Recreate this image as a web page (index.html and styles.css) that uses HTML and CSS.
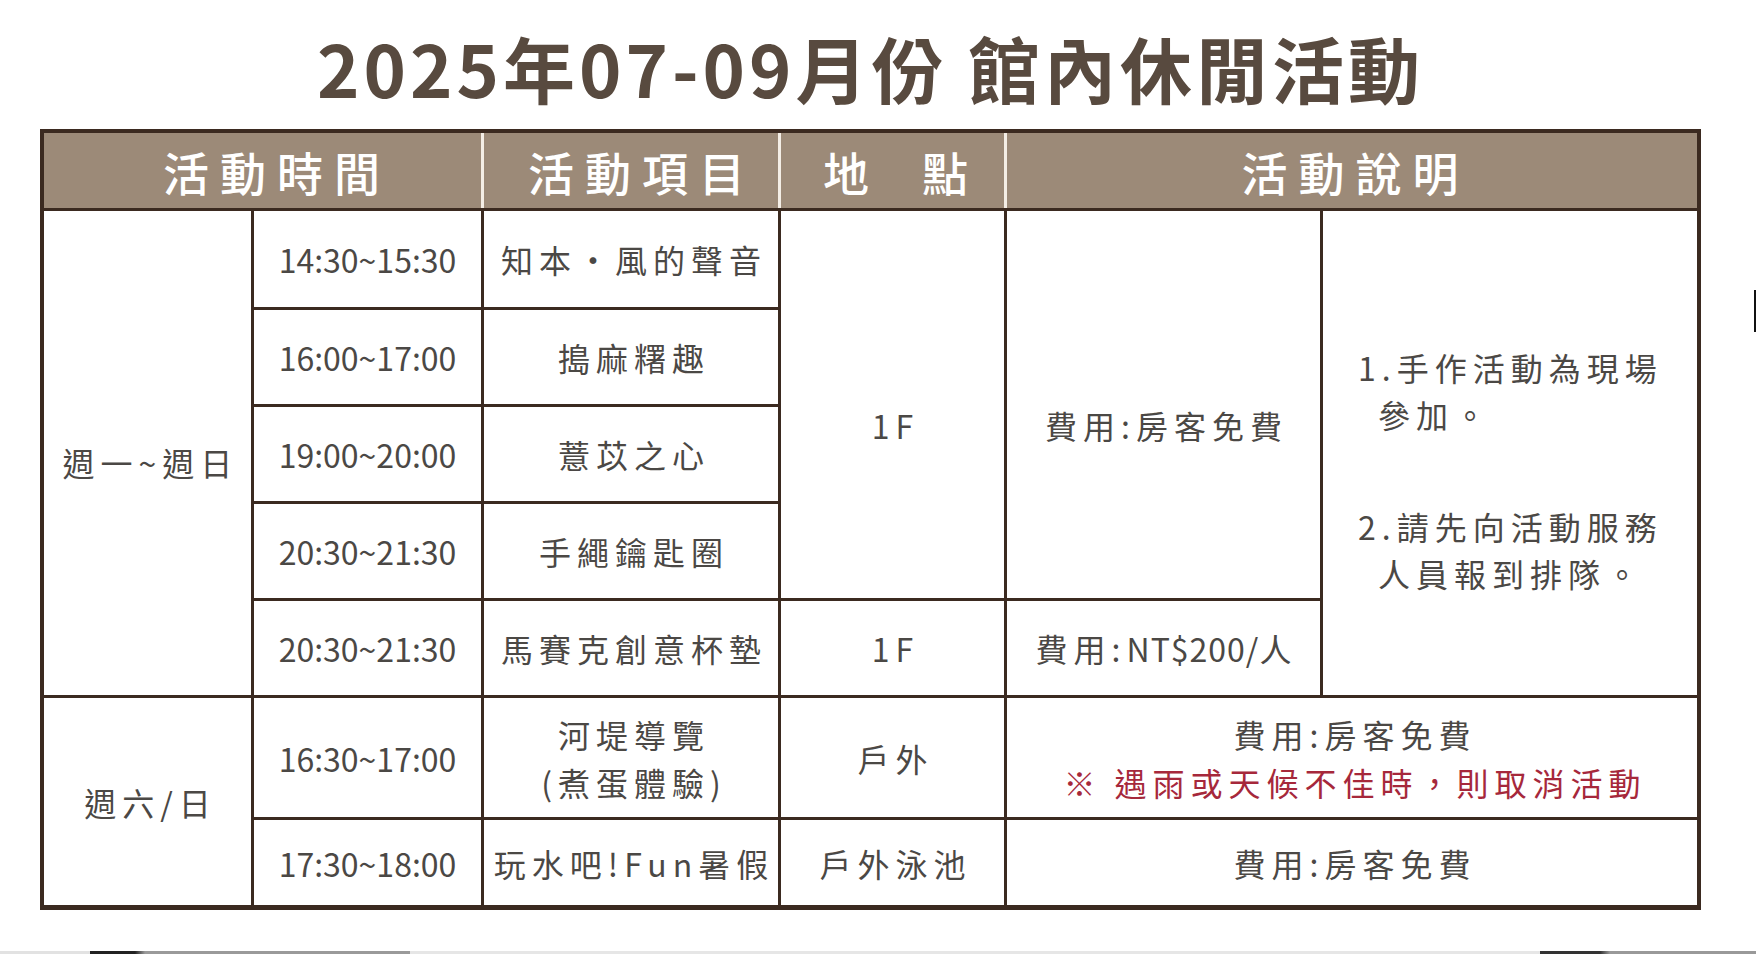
FILE: index.html
```html
<!DOCTYPE html>
<html lang="zh-Hant">
<head>
<meta charset="utf-8">
<title>2025年07-09月份 館內休閒活動</title>
<link rel="stylesheet" href="styles.css">
</head>
<body>
<main class="page">
  <div class="wrap">
    <h1 class="title">2025年07-09月份 館內休閒活動</h1>
    <section class="sheet">
      <div class="head">
        <div class="hc hc-time">活動時間</div>
        <div class="hc hc-item">活動項目</div>
        <div class="hc hc-place">地<span class="gap"></span>點</div>
        <div class="hc hc-desc">活動說明</div>
      </div>
      <div class="grid">
        <div class="cell day-week">週一~週日</div>
        <div class="cell time r1">14:30~15:30</div>
        <div class="cell item r1">知本・風的聲音</div>
        <div class="cell time r2">16:00~17:00</div>
        <div class="cell item r2">搗麻糬趣</div>
        <div class="cell time r3">19:00~20:00</div>
        <div class="cell item r3">薏苡之心</div>
        <div class="cell time r4">20:30~21:30</div>
        <div class="cell item r4">手繩鑰匙圈</div>
        <div class="cell time r5">20:30~21:30</div>
        <div class="cell item r5">馬賽克創意杯墊</div>
        <div class="cell place-big">1F</div>
        <div class="cell fee-big">費用:房客免費</div>
        <div class="cell notes">
          <p class="note">1.手作活動為現場<br>參加。</p>
          <p class="note">2.請先向活動服務<br>人員報到排隊。</p>
        </div>
        <div class="cell place r5">1F</div>
        <div class="cell fee r5"><span>費用:<span class="latin">NT$200/</span>人</span></div>

        <div class="cell day-weekend">週六/日</div>
        <div class="cell time r6">16:30~17:00</div>
        <div class="cell item r6"><span class="stack">河堤導覽<br>(煮蛋體驗)</span></div>
        <div class="cell place r6">戶外</div>
        <div class="cell wide r6"><span class="stack">費用:房客免費<br><span class="warn">※ 遇雨或天候不佳時，則取消活動</span></span></div>
        <div class="cell time r7">17:30~18:00</div>
        <div class="cell item r7">玩水吧!Fun暑假</div>
        <div class="cell place r7">戶外泳池</div>
        <div class="cell wide r7">費用:房客免費</div>
      </div>
    </section>
  </div>
  <div class="edge-mark"></div>
  <div class="bottom-strip"></div>
</main>
</body>
</html>
```

FILE: styles.css
```css
* { box-sizing: border-box; }

html, body {
  margin: 0;
  padding: 0;
  background: #ffffff;
}

body {
  font-family: "Noto Sans CJK TC", "Noto Sans", sans-serif;
  color: #4b4845;
}

.page {
  position: relative;
  width: 1756px;
  height: 954px;
  overflow: hidden;
  display: flex;
  flex-direction: column;
}

.wrap {
  margin-left: 40px;
  width: 1661px;
  padding-top: 31px;
  flex: 1;
}

.title {
  margin: 0 0 26px 0;
  font-size: 72px;
  line-height: 72px;
  font-weight: 700;
  letter-spacing: 4px;
  color: #584a3f;
  text-align: center;
  white-space: nowrap;
}

.sheet {
  width: 1661px;
  border: 4px solid #3b2a20;
  border-bottom-width: 5px;
  background: #3b2a20;
  display: flex;
  flex-direction: column;
  gap: 3px;
}

.head {
  display: grid;
  grid-template-columns: 437px 294px 223px 690px;
  column-gap: 3px;
  height: 75px;
  background: #f4eee6;
}

.hc {
  background: #9c8a78;
  color: #ffffff;
  font-size: 46px;
  font-weight: 500;
  letter-spacing: 11px;
  display: flex;
  align-items: center;
  justify-content: center;
  padding-left: 11px;
}

.hc-time { padding-left: 29px; }
.hc-item { padding-left: 22px; }
.hc-place { padding-left: 17px; }
.hc-desc { padding-left: 7px; }

.hc .gap {
  display: inline-block;
  width: 42px;
}

.grid {
  display: grid;
  grid-template-columns: 207px 227px 294px 223px 313px 374px;
  grid-template-rows: 96px 94px 94px 94px 94px 119px 85px;
  gap: 3px;
}

.cell {
  background: #ffffff;
  display: flex;
  align-items: center;
  justify-content: center;
  text-align: center;
  font-size: 32px;
  line-height: 48px;
  letter-spacing: 6px;
  padding-left: 6px;
  white-space: nowrap;
}

.stack { display: block; }

.r1 { grid-row: 1; }
.r2 { grid-row: 2; }
.r3 { grid-row: 3; }
.r4 { grid-row: 4; }
.r5 { grid-row: 5; }
.r6 { grid-row: 6; }
.r7 { grid-row: 7; }

.time {
  grid-column: 2;
  font-size: 32px;
  letter-spacing: 0;
  padding-left: 0;
}

.item { grid-column: 3; }
.place { grid-column: 4; }
.fee { grid-column: 5; }
.wide { grid-column: 5 / span 2; }

.day-week {
  grid-column: 1;
  grid-row: 1 / span 5;
  padding-top: 18px;
}

.day-weekend {
  grid-column: 1;
  grid-row: 6 / span 2;
}

.place-big {
  grid-column: 4;
  grid-row: 1 / span 4;
  padding-top: 41px;
}

.fee-big {
  grid-column: 5;
  grid-row: 1 / span 4;
  padding-top: 41px;
}

.notes {
  grid-column: 6;
  grid-row: 1 / span 5;
  flex-direction: column;
  align-items: flex-start;
  justify-content: center;
  text-align: left;
  padding: 34px 0 0 35px;
}

.note {
  margin: 0;
  line-height: 47px;
  padding-left: 20px;
  text-indent: -20px;
}

.note + .note { margin-top: 65px; }

.latin { letter-spacing: 1px; }

.warn {
  color: #a6283b;
}

.edge-mark {
  position: absolute;
  right: 0;
  top: 290px;
  width: 2px;
  height: 42px;
  background: #111111;
}

.bottom-strip {
  height: 3px;
  background: linear-gradient(to right,
    #e2e2e2 0, #e2e2e2 90px,
    #222222 90px, #222222 135px,
    #9a9a9a 145px, #9a9a9a 410px,
    #e6e6e6 410px, #e6e6e6 1540px,
    #333333 1540px, #333333 1600px,
    #999999 1610px, #999999 1756px);
}
```
